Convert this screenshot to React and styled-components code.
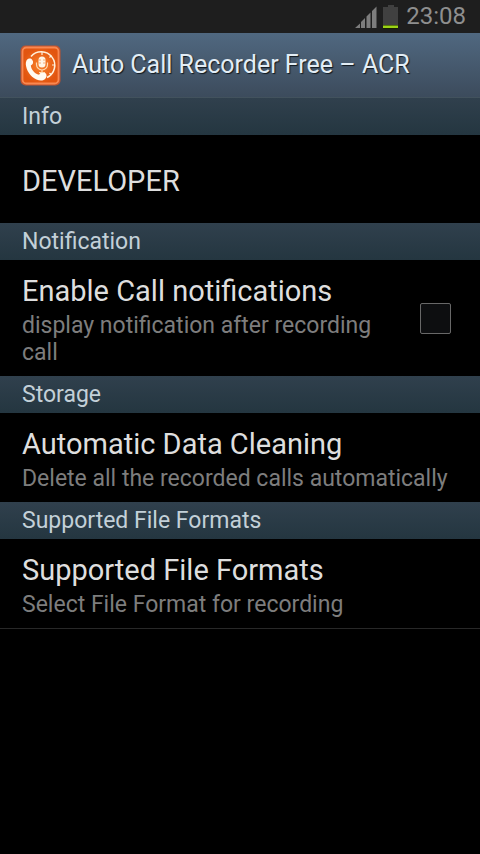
import React, { useState } from "react";
import styled, { createGlobalStyle } from "styled-components";

const GlobalStyle = createGlobalStyle`
  * { box-sizing: border-box; }
  body {
    margin: 0;
    background: #000;
    font-family: Roboto, "Liberation Sans", sans-serif;
  }
  h1, h2, p, ul { margin: 0; padding: 0; }
`;

const Screen = styled.div`
  min-height: 100vh;
  background: #000;
`;

const StatusBar = styled.div`
  display: flex;
  justify-content: flex-end;
  align-items: center;
  height: 33px;
  padding-right: 14px;
  background: #1e1e1e;
`;

const Clock = styled.time`
  margin-left: 8px;
  color: #8f8f8f;
  font-size: 24px;
  line-height: 33px;
`;

const SignalIcon = styled.svg`
  width: 23px;
  height: 22px;
`;

const BatteryIcon = styled.svg`
  width: 15px;
  height: 24px;
  margin-left: 6px;
`;

const TitleBar = styled.header`
  display: flex;
  align-items: center;
  gap: 11px;
  height: 65px;
  padding: 0 20px;
  border-bottom: 1px solid #42525d;
  background: linear-gradient(#506880, #3c4b5c);
`;

const AppIcon = styled.svg`
  flex: none;
  width: 41px;
  height: 41px;
`;

const AppTitle = styled.h1`
  color: #e2edf5;
  font-size: 25px;
  font-weight: 400;
  line-height: 32px;
  text-shadow: 1px 1px 1px #10181f;
`;

const SectionHeader = styled.h2`
  padding: 1px 22px 0;
  color: #c3d0d8;
  background: linear-gradient(#30404d, #243640);
  font-size: 23px;
  font-weight: 400;
  line-height: 36px;
`;

const rowLayout = `
  display: flex;
  align-items: center;
  justify-content: space-between;
  width: 100%;
  min-height: 88px;
  padding: 13px 22px 10px;
  border: 0;
  background: #000;
  font-family: inherit;
  text-align: left;
  cursor: pointer;
`;

const RowButton = styled.button`
  ${rowLayout}
`;

const RowLabel = styled.label`
  ${rowLayout}
  padding-right: 29px;
`;

const RowText = styled.span`
  display: flex;
  flex-direction: column;
  gap: 3px;
`;

const RowTitle = styled.span`
  color: #dedede;
  font-size: 29px;
  line-height: 36px;
`;

const Summary = styled.span`
  color: #7d7d7d;
  font-size: 23px;
  line-height: 27px;
`;

const Checkbox = styled.input`
  appearance: none;
  flex: none;
  width: 31px;
  height: 31px;
  margin: 0 0 3px 30px;
  border: 1px solid #686868;
  border-radius: 2px;
  background: #0d0e10;
  &:checked { background: #8fc31f; }
`;

const EndDivider = styled.hr`
  height: 1px;
  margin: 0;
  border: 0;
  background: #282828;
`;

function Logo() {
  return (
    <AppIcon viewBox="0 0 41 41" aria-hidden="true">
      <defs>
        <radialGradient id="face">
          <stop offset="0" stopColor="#f9822c" />
          <stop offset="1" stopColor="#e25510" />
        </radialGradient>
      </defs>
      <rect x="0.5" y="0.5" width="40" height="40" rx="5" fill="#c4532c" />
      <rect x="2.5" y="2.5" width="36" height="36" rx="4" fill="url(#face)" stroke="#f98850" strokeWidth="1.8" />
      <path d="M11 11.500A13.500 13.500 0 1 1 27 32.500" fill="none" stroke="#fff1dc" strokeWidth="1.5" />
      <path d="M22 7v3M35 20h-3M31.500 10.500l-2 2M31.500 30l-2-2" stroke="#fff1dc" strokeWidth="1.2" />
      <path d="M6.500 15.500c1.500-2.200 4.300-2.600 5.800-.6 1.600 2.200.8 4.300-1.500 5.600.7 4.500 3.600 8 8.300 9.300 1.300-2.500 3.700-3.500 5.900-2.100 2.200 1.500 2 4.500-.2 6.500-2.700 2.400-8.600 1.200-12.700-2.500C7.600 27.800 4.300 19.500 6.500 15.500z" fill="#fffaf2" />
      <rect x="18.500" y="11.500" width="7" height="11" rx="3.500" fill="#fff5e6" />
      <path d="M18.500 15h2.500M18.500 18h2.500M23 15h2.500M23 18h2.500" stroke="#f39a58" strokeWidth="0.8" />
      <path d="M16.500 17.500v2a5.500 5.500 0 0 0 11 0v-2M22 25v2M19 27.500h6" fill="none" stroke="#ffd9b0" strokeWidth="1.2" />
    </AppIcon>
  );
}

export default function App() {
  const [notify, setNotify] = useState(false);
  return (
    <Screen>
      <GlobalStyle />
      <StatusBar>
        <SignalIcon viewBox="0 0 23 22" role="img" aria-label="Signal strength">
          <path d="M1 22L6 17.500V22zM7 16L11 12V22h-4zM12.500 10.500L16.500 6.500V22h-4zM18 5L22.500 0.500V22h-4.500z" fill="#7d7d7d" />
        </SignalIcon>
        <BatteryIcon viewBox="0 0 15 24" role="img" aria-label="Battery low">
          <path d="M5 0h6v2h4v22H0V2h5z" fill="#404040" />
          <rect y="20" width="15" height="4" fill="#182100" />
          <rect y="20.500" width="15" height="2.500" fill="#9bd317" />
        </BatteryIcon>
        <Clock>23:08</Clock>
      </StatusBar>
      <TitleBar>
        <Logo />
        <AppTitle>Auto Call Recorder Free – ACR</AppTitle>
      </TitleBar>
      <main>
        <section>
          <SectionHeader>Info</SectionHeader>
          <RowButton type="button">
            <RowTitle>DEVELOPER</RowTitle>
          </RowButton>
        </section>
        <section>
          <SectionHeader>Notification</SectionHeader>
          <RowLabel>
            <RowText>
              <RowTitle>Enable Call notifications</RowTitle>
              <Summary>display notification after recording call</Summary>
            </RowText>
            <Checkbox type="checkbox" checked={notify} onChange={(e) => setNotify(e.target.checked)} />
          </RowLabel>
        </section>
        <section>
          <SectionHeader>Storage</SectionHeader>
          <RowButton type="button">
            <RowText>
              <RowTitle>Automatic Data Cleaning</RowTitle>
              <Summary>Delete all the recorded calls automatically</Summary>
            </RowText>
          </RowButton>
        </section>
        <section>
          <SectionHeader>Supported File Formats</SectionHeader>
          <RowButton type="button">
            <RowText>
              <RowTitle>Supported File Formats</RowTitle>
              <Summary>Select File Format for recording</Summary>
            </RowText>
          </RowButton>
        </section>
        <EndDivider />
      </main>
    </Screen>
  );
}
